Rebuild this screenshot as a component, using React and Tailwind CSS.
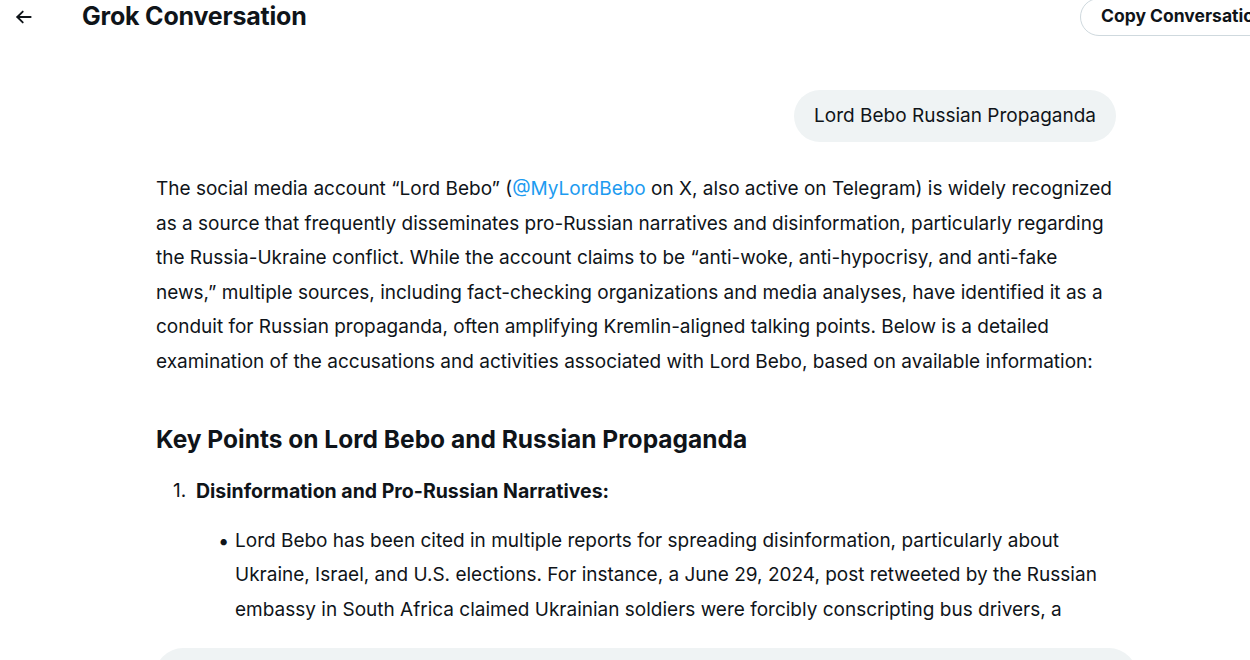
import React from 'react';

const ArrowLeft = () => (
  <svg viewBox="0 0 24 24" className="w-5 h-5" fill="none" stroke="currentColor" strokeWidth="2.2" strokeLinecap="round" strokeLinejoin="round">
    <path d="M20 12H4" />
    <path d="M10.5 5.5L4 12l6.5 6.5" />
  </svg>
);

const paragraphLines = [
  <>The social media account “Lord Bebo” (<span className="text-[#1d9bf0]">@MyLordBebo</span> on X, also active on Telegram) is widely recognized</>,
  'as a source that frequently disseminates pro-Russian narratives and disinformation, particularly regarding',
  'the Russia-Ukraine conflict. While the account claims to be “anti-woke, anti-hypocrisy, and anti-fake',
  'news,” multiple sources, including fact-checking organizations and media analyses, have identified it as a',
  'conduit for Russian propaganda, often amplifying Kremlin-aligned talking points. Below is a detailed',
  'examination of the accusations and activities associated with Lord Bebo, based on available information:',
];

const bulletLines = [
  'Lord Bebo has been cited in multiple reports for spreading disinformation, particularly about',
  'Ukraine, Israel, and U.S. elections. For instance, a June 29, 2024, post retweeted by the Russian',
  'embassy in South Africa claimed Ukrainian soldiers were forcibly conscripting bus drivers, a',
];

export default function App() {
  return (
    <div className="h-[660px] w-[1250px] overflow-hidden bg-white text-[#0f1419] font-['Inter','Noto_Sans',sans-serif]">
      {/* header */}
      <div className="flex h-[33px] items-center">
        <div className="ml-[14px] flex w-5 items-center justify-center">
          <ArrowLeft />
        </div>
        <h1 className="ml-[48px] text-[25px] font-bold tracking-[-0.2px]">Grok Conversation</h1>
        <div className="ml-auto flex h-[38px] w-[200px] shrink-0 translate-x-[30px] items-center rounded-full border border-[#cfd9de] pl-5 text-[17.5px] font-bold whitespace-nowrap">
          Copy Conversation
        </div>
      </div>

      {/* conversation */}
      <div className="ml-[156px] w-[960px]">
        <div className="mt-[57px] flex justify-end">
          <div className="flex h-[52px] items-center rounded-[26px] bg-[#eff3f4] px-5 text-[19px]">
            Lord Bebo Russian Propaganda
          </div>
        </div>

        <p className="mt-[30px] text-[19px] leading-[34.5px] whitespace-nowrap">
          {paragraphLines.map((l, i) => (
            <React.Fragment key={i}>
              {l}
              {i < paragraphLines.length - 1 && <br />}
            </React.Fragment>
          ))}
        </p>

        <h2 className="mt-[44px] text-[24.5px] leading-[32px] font-bold">Key Points on Lord Bebo and Russian Propaganda</h2>

        <div className="mt-[19px] flex text-[19px] leading-[34.5px]">
          <span className="ml-[17px] w-[23px]">1.</span>
          <span className="text-[19.5px] font-bold">Disinformation and Pro-Russian Narratives:</span>
        </div>

        <div className="mt-[15px] flex text-[19px] leading-[34.5px]">
          <span className="ml-[62px] w-[17px] text-[20px]">•</span>
          <p className="whitespace-nowrap">
            {bulletLines.map((l, i) => (
              <React.Fragment key={i}>
                {l}
                {i < bulletLines.length - 1 && <br />}
              </React.Fragment>
            ))}
          </p>
        </div>
      </div>

      <div className="ml-[155px] mt-[21px] h-[60px] w-[982px] rounded-[28px] bg-[#eff3f4]" />
    </div>
  );
}
